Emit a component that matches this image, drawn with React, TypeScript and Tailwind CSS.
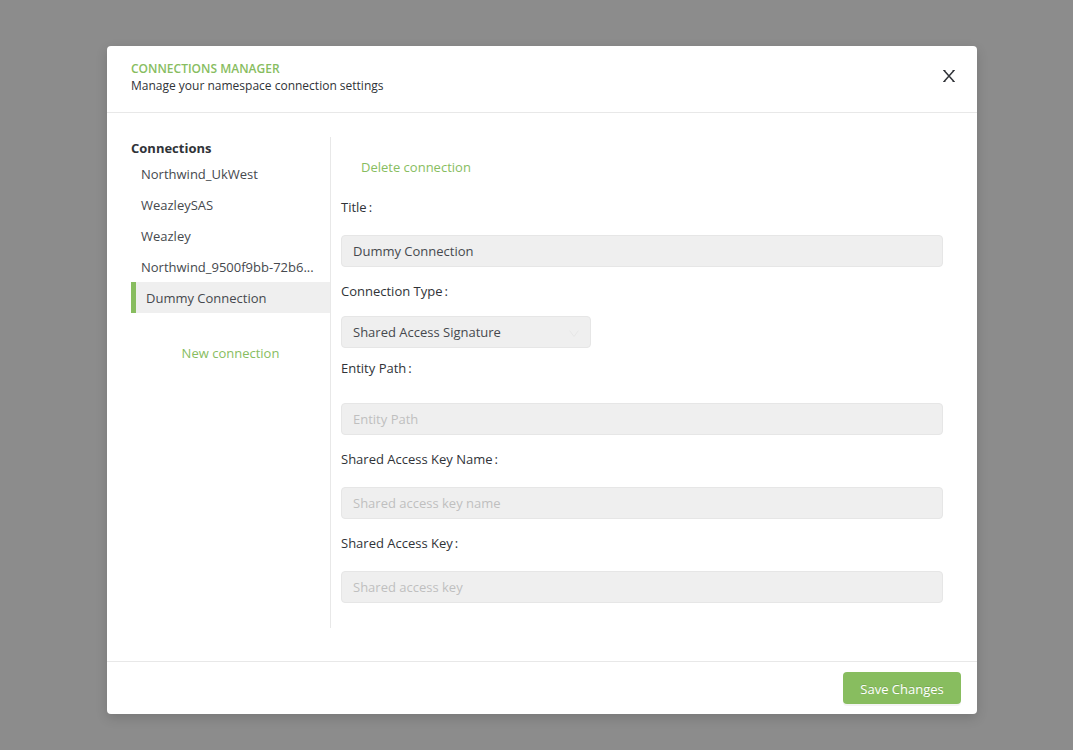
import { useState } from "react";
import type { ReactNode } from "react";

const connections = [
  "Northwind_UkWest",
  "WeazleySAS",
  "Weazley",
  "Northwind_9500f9bb-72b6...",
  "Dummy Connection",
];

const control =
  "h-8 rounded border border-[#e6e6e6] bg-[#efefef] px-[11px] text-[#46494e] placeholder:text-[#bfbfbf] outline-none focus:border-[#88bd5f]";

function Field({
  id,
  label,
  gap = "gap-2",
  children,
}: {
  id: string;
  label: string;
  gap?: string;
  children: ReactNode;
}) {
  return (
    <div className={`flex flex-col ${gap}`}>
      <label htmlFor={id} className="flex h-10 items-center gap-0.5 text-[#303338]">
        {label}
        <span>:</span>
      </label>
      {children}
    </div>
  );
}

export default function App() {
  const [selected, setSelected] = useState(4);
  const [title, setTitle] = useState("Dummy Connection");

  return (
    <div className="min-h-screen bg-[#8c8c8c] pt-[46px] pr-24 pb-9 pl-[107px] font-['Open_Sans','Noto_Sans',sans-serif] text-[13px] leading-5 text-[#46494e]">
      <div
        role="dialog"
        aria-labelledby="dialog-title"
        className="rounded bg-white shadow-[0_4px_12px_rgba(0,0,0,0.15)]"
      >
        <header className="flex h-[67px] items-start justify-between border-b border-[#e8e8e8] pt-3.5 pr-3 pl-6">
          <div>
            <h1 id="dialog-title" className="text-xs leading-[18px] font-semibold text-[#88bd5f]">
              CONNECTIONS MANAGER
            </h1>
            <p className="text-xs leading-4 text-[#303338]">
              Manage your namespace connection settings
            </p>
          </div>
          <button type="button" aria-label="Close" className="flex h-8 w-8 items-center justify-center">
            <svg width="12" height="12" viewBox="0 0 12 12" fill="none" stroke="#303338">
              <path d="M1.3 .8 10.7 11.2M10.7 .8 1.3 11.2" strokeWidth="1.5" />
              <path d="M.2 .5h2.2M9.6 .5h2.2M.2 11.5h2.2M9.6 11.5h2.2" strokeWidth="1" />
            </svg>
          </button>
        </header>

        <div className="flex px-6 pt-6 pb-[33px]">
          <aside className="flex w-[200px] shrink-0 flex-col border-r border-[#e8e8e8]">
            <h2 className="pt-px leading-5 font-bold text-[#303338]">Connections</h2>
            <ul>
              {connections.map((name, i) => (
                <li key={name}>
                  <button
                    type="button"
                    onClick={() => setSelected(i)}
                    className={`block h-[31px] w-full pl-2.5 text-left whitespace-nowrap ${
                      i === selected ? "border-l-[5px] border-[#88bd5f] bg-[#efefef]" : ""
                    }`}
                  >
                    {name}
                  </button>
                </li>
              ))}
            </ul>
            <button type="button" className="mt-6 h-8 self-center px-4 text-[#88bd5f]">
              New connection
            </button>
          </aside>

          <form id="connection-form" className="min-w-0 flex-1 pt-3.5 pr-2.5 pb-[25px] pl-2.5" onSubmit={(e) => e.preventDefault()}>
            <button type="button" className="ml-1 block h-8 px-4 text-[#88bd5f]">
              Delete connection
            </button>
            <div className="mt-1 flex flex-col gap-1">
              <Field id="title" label="Title">
                <input id="title" className={control} value={title} onChange={(e) => setTitle(e.target.value)} />
              </Field>
              <div>
                <Field id="type" label="Connection Type" gap="gap-[5px]">
                  <div className="grid w-[250px] items-center">
                    <select id="type" className={`${control} col-start-1 row-start-1 appearance-none`}>
                      <option>Shared Access Signature</option>
                      <option>Connection String</option>
                    </select>
                    <svg
                      className="pointer-events-none col-start-1 row-start-1 mt-1 mr-3 justify-self-end"
                      width="10"
                      height="8"
                      viewBox="0 0 10 8"
                      fill="none"
                      stroke="#e6e6e6"
                    >
                      <path d="M.7 .7 5 6.6 9.3 .7" />
                    </svg>
                  </div>
                </Field>
                <Field id="entity" label="Entity Path" gap="gap-[15px]">
                  <input id="entity" className={control} placeholder="Entity Path" />
                </Field>
              </div>
              <Field id="key-name" label="Shared Access Key Name">
                <input id="key-name" className={control} placeholder="Shared access key name" />
              </Field>
              <Field id="key" label="Shared Access Key">
                <input id="key" className={control} placeholder="Shared access key" />
              </Field>
            </div>
          </form>
        </div>

        <footer className="flex justify-end border-t border-[#e8e8e8] px-4 py-2.5">
          <button
            type="submit"
            form="connection-form"
            className="h-8 w-[118px] rounded bg-[#88bd5f] pt-px text-white shadow-[0_2px_0_rgba(0,0,0,0.045)] [text-shadow:0_-1px_0_rgba(0,0,0,0.12)]"
          >
            Save Changes
          </button>
        </footer>
      </div>
    </div>
  );
}
